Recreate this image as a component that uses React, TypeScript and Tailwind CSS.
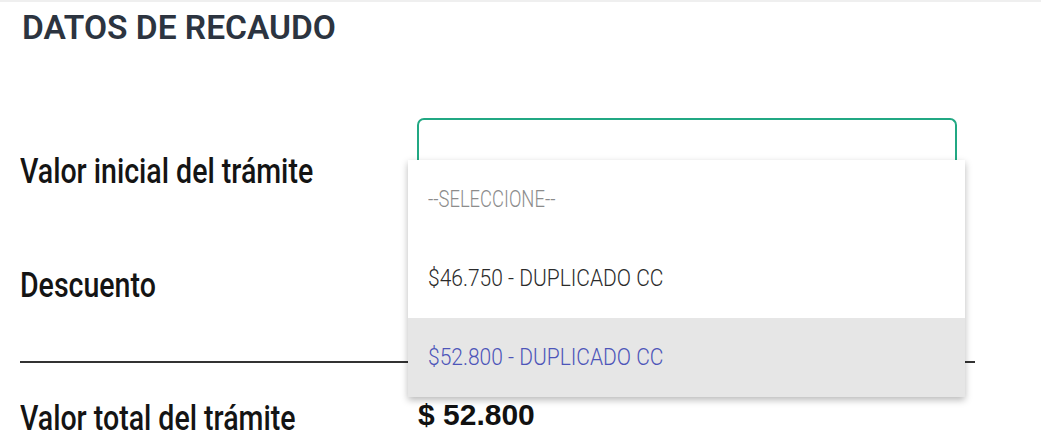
const labelText =
  "origin-left scale-x-[0.815] font-['Roboto',sans-serif] text-[35px] font-medium text-[#141414]"
const optionText = "origin-left font-['Roboto',sans-serif] font-light leading-none"

const options = [
  { label: "--SELECCIONE--", tone: "text-[#8c8c8c]", text: "text-[23px] scale-x-[0.8]" },
  { label: "$46.750 - DUPLICADO CC", tone: "text-[#2b2b2b]", text: "text-[24px] scale-x-[0.875]" },
  { label: "$52.800 - DUPLICADO CC", tone: "text-[#4d55b9] bg-[#e6e6e6]", text: "text-[24px] scale-x-[0.875]" },
]

function OptionsMenu() {
  return (
    <div className="absolute left-[-9px] top-[42px] z-10 w-[557px] bg-white shadow-[0_3px_7px_rgba(0,0,0,0.28)]">
      {options.map((option) => (
        <div key={option.label} className={`flex h-[79px] items-center px-5 ${option.tone}`}>
          <span className={`inline-block ${optionText} ${option.text}`}>{option.label}</span>
        </div>
      ))}
    </div>
  )
}

export default function App() {
  return (
    <div className="h-[437px] w-[1041px] overflow-hidden border-t-2 border-[#efefef] bg-white">
      <div className="px-5">
        <h2 className="mt-[9px] pl-[2px] font-['Roboto',sans-serif] text-[33.5px] font-semibold leading-none text-[#2c3440]">
          DATOS DE RECAUDO
        </h2>

        <div className="mt-[73px] flex h-[130px] items-start">
          <div className="w-[397px] pt-[36px]">
            <div className={`${labelText} leading-none`}>Valor inicial del trámite</div>
          </div>
          <div className="relative">
            <div className="h-[52px] w-[540px] rounded-t-[7px] border-2 border-b-0 border-[#21a883]" />
            <OptionsMenu />
          </div>
        </div>

        <div className="flex h-[113px] items-start">
          <div className="w-[397px] pt-[20px]">
            <div className={`${labelText} leading-none`}>Descuento</div>
          </div>
        </div>

        <div className="h-[2px] w-[955px] bg-[#333333]" />

        <div className="flex items-start">
          <div className="w-[398px] pt-[42px]">
            <div className={`${labelText} leading-[28px]`}>Valor total del trámite</div>
          </div>
          <div className="pt-[37px] font-['Liberation_Sans',Arial,sans-serif] text-[30px] font-bold leading-none text-[#111111]">
            $ 52.800
          </div>
        </div>
      </div>
    </div>
  )
}
